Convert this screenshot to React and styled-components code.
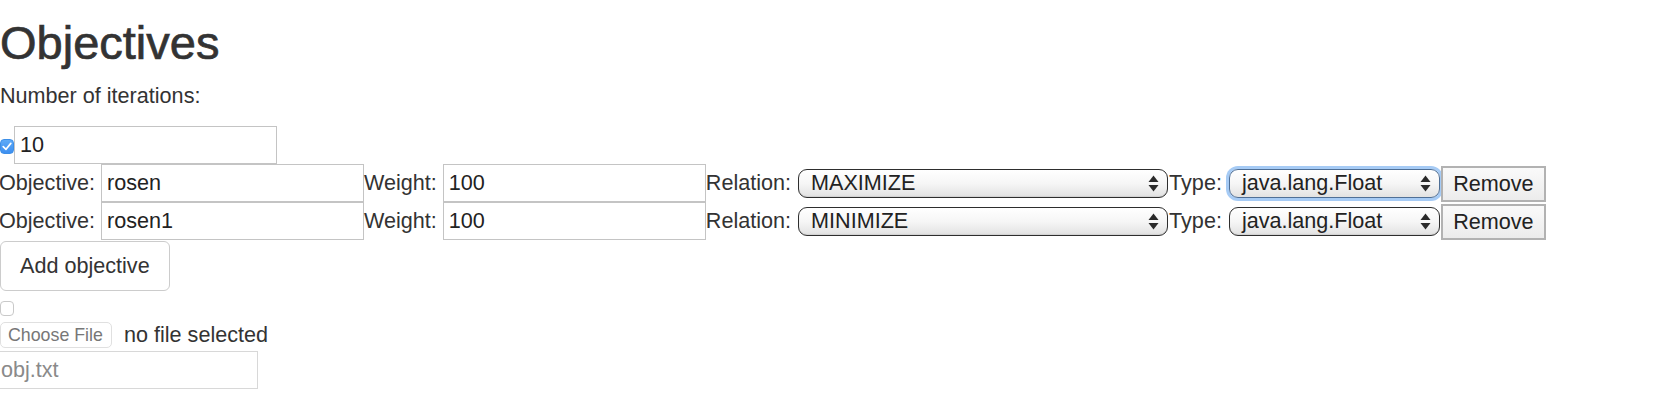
import React from 'react'
import styled, { createGlobalStyle } from 'styled-components'

const GlobalStyle = createGlobalStyle`
  html, body {
    margin: 0;
    padding: 0;
    background: #fff;
  }
  body {
    font-family: "Liberation Sans", Arial, Helvetica, sans-serif;
    font-size: 21.6px;
    color: #333;
  }
  * { box-sizing: border-box; }
`

const Page = styled.div`
  display: flex;
  flex-direction: column;
  align-items: flex-start;
  width: 1674px;
  height: 418px;
  overflow: hidden;
`

const Title = styled.h1`
  margin: 17px 0 12px 0;
  font-size: 47px;
  line-height: 52px;
  font-weight: 500;
  color: #333;
  -webkit-text-stroke: 0.7px #333;
`

const Label = styled.label`
  display: block;
  line-height: 30px;
  margin-left: ${p => p.$shift || 0}px;
  margin-right: ${p => p.$gap || 0}px;
  white-space: nowrap;
`

const Row = styled.div`
  display: flex;
  align-items: center;
  height: ${p => p.$h || 38}px;
  margin-top: ${p => p.$mt || 0}px;
`

const TextInput = styled.input`
  width: 263px;
  height: 38px;
  margin: 0;
  margin-left: ${p => p.$ml || 0}px;
  margin-top: ${p => p.$mt || 0}px;
  padding: 0 5px;
  border: 1px solid ${p => (p.$light ? '#d8d8d8' : '#c4c4c4')};
  border-radius: 0;
  font-family: "Liberation Sans", Arial, sans-serif;
  font-size: 21.6px;
  color: #222;
  background: #fff;
  outline: none;
  &::placeholder { color: #8a8a8a; }
`

const Check = styled.span`
  display: inline-flex;
  align-items: center;
  justify-content: center;
  width: 14px;
  height: 15px;
  margin-top: ${p => p.$mt || 0}px;
  border-radius: 4px;
  border: 1px solid ${p => (p.$on ? '#3d8fe8' : '#c9c9c9')};
  background: ${p => (p.$on ? 'linear-gradient(#5eaaf7, #3d8ff0)' : '#fff')};
  flex-shrink: 0;
`

const Select = styled.div`
  display: flex;
  align-items: center;
  justify-content: space-between;
  width: ${p => p.$w}px;
  height: 29px;
  padding: 0 8px 0 12px;
  border: 1.5px solid ${p => (p.$focus ? '#4f6f96' : '#2e2e2e')};
  border-radius: 9px;
  background: linear-gradient(#ffffff 0%, #f6f6f6 50%, #e2e2e2 100%);
  box-shadow: ${p => (p.$focus ? '0 0 0 3px #a6cbf5' : 'inset 0 -1px 1px rgba(0,0,0,0.08)')};
  font-size: 21.6px;
  line-height: 26px;
  color: #222;
  white-space: nowrap;
`

const Arrows = () => (
  <svg width="11" height="17" viewBox="0 0 11 17">
    <path d="M5.5 0.5 L10.5 7 L0.5 7 Z" fill="#2a2a2a" />
    <path d="M5.5 16.5 L10.5 10 L0.5 10 Z" fill="#2a2a2a" />
  </svg>
)

const RemoveButton = styled.button`
  align-self: flex-end;
  width: 105px;
  height: 36px;
  margin: 0 0 0 1px;
  padding: 0;
  border: 2px solid #b2b2b2;
  background: linear-gradient(#fafafa, #ececec);
  font-family: "Liberation Sans", Arial, sans-serif;
  font-size: 21.6px;
  color: #222;
`

const AddButton = styled.button`
  height: 50px;
  margin: 1px 0 0 0;
  padding: 0 19px;
  border: 1px solid #ccc;
  border-radius: 6px;
  background: #fff;
  font-family: "Liberation Sans", Arial, sans-serif;
  font-size: 21.6px;
  color: #333;
`

const FileButton = styled.button`
  height: 26px;
  width: 112px;
  margin: 0 12px 0 0;
  padding: 0 0 0 7px;
  text-align: left;
  border: 1px solid #e0e0e0;
  border-radius: 5px;
  background: #fff;
  font-family: "Liberation Sans", Arial, sans-serif;
  font-size: 17.8px;
  color: #777;
`

const objectives = [
  { name: 'rosen', weight: '100', relation: 'MAXIMIZE', focus: true },
  { name: 'rosen1', weight: '100', relation: 'MINIMIZE', focus: false },
]

export default function App() {
  return (
    <>
      <GlobalStyle />
      <Page>
        <Title>Objectives</Title>
        <Label>Number of iterations:</Label>
        <Row $mt={15}>
          <Check $on $mt={2}>
            <svg width="10" height="9" viewBox="0 0 10 9">
              <path d="M1.2 4.6 L4 7.3 L8.8 1.4" stroke="#fff" strokeWidth="1.7" fill="none" strokeLinecap="round" strokeLinejoin="round" />
            </svg>
          </Check>
          <TextInput defaultValue="10" readOnly />
        </Row>
        {objectives.map(o => (
          <Row key={o.name}>
            <Label $shift={-1} $gap={6}>Objective:</Label>
            <TextInput defaultValue={o.name} readOnly />
            <Label $gap={6}>Weight:</Label>
            <TextInput defaultValue={o.weight} readOnly />
            <Label $gap={7}>Relation:</Label>
            <Select $w={370}>
              <span>{o.relation}</span>
              <Arrows />
            </Select>
            <Label $shift={1} $gap={7}>Type:</Label>
            <Select $w={211} $focus={o.focus}>
              <span>java.lang.Float</span>
              <Arrows />
            </Select>
            <RemoveButton>Remove</RemoveButton>
          </Row>
        ))}
        <AddButton>Add objective</AddButton>
        <Check $mt={10} />
        <Row $h={30} $mt={4}>
          <FileButton>Choose File</FileButton>
          <Label>no file selected</Label>
        </Row>
        <TextInput $ml={-5} $mt={1} $light placeholder="obj.txt" />
      </Page>
    </>
  )
}
